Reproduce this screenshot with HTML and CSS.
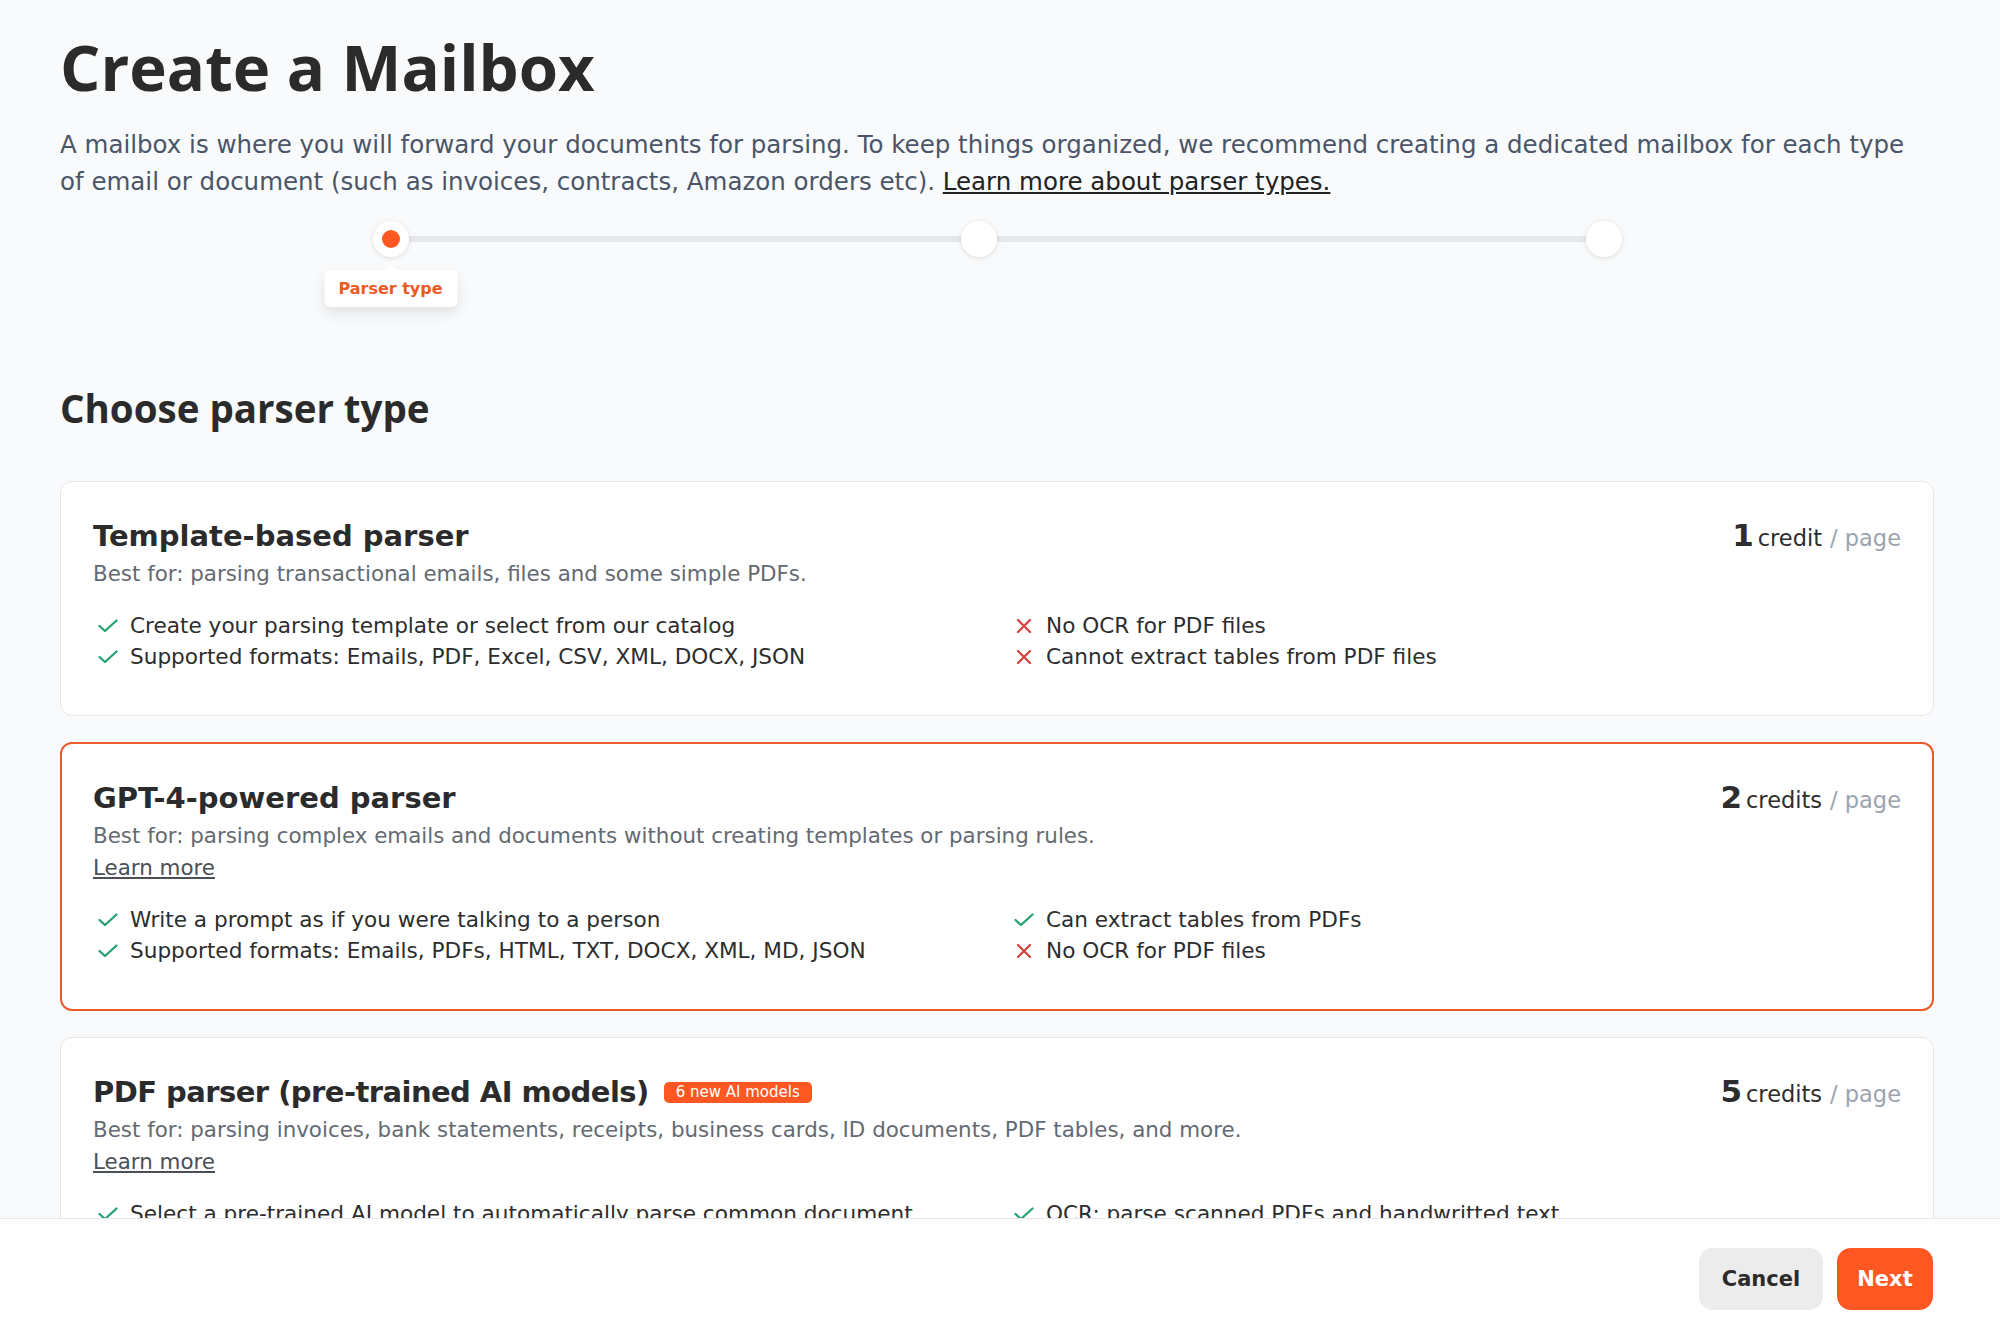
FILE: index.html
```html
<!DOCTYPE html>
<html lang="en">
<head>
<meta charset="utf-8">
<title>Create a Mailbox</title>
<link rel="stylesheet" href="styles.css">
</head>
<body>
<main class="page">
  <h1 class="title">Create a Mailbox</h1>
  <p class="intro">A mailbox is where you will forward your documents for parsing. To keep things organized, we recommend creating a dedicated mailbox for each type of email or document (such as invoices, contracts, Amazon orders etc). <a class="intro-link" href="#">Learn more about parser types.</a></p>

  <div class="stepper">
    <div class="step">
      <span class="dot"></span>
      <div class="tip">Parser type</div>
    </div>
    <div class="line line-a"></div>
    <div class="step"></div>
    <div class="line line-b"></div>
    <div class="step"></div>
  </div>

  <h2 class="section-title">Choose parser type</h2>

  <div class="cards">
    <section class="card">
      <div class="card-head">
        <div class="card-info">
          <h3 class="card-title">Template-based parser</h3>
          <p class="best">Best for: parsing transactional emails, files and some simple PDFs.</p>
        </div>
        <div class="price"><b>1</b><span>credit</span><span class="per">/ page</span></div>
      </div>
      <div class="features">
        <ul>
          <li><svg class="ic" viewBox="0 0 20 14"><polyline points="1.5,7 7,12 18.5,1.5" fill="none" stroke="#23a26f" stroke-width="2.3" stroke-linecap="round" stroke-linejoin="round"/></svg><span>Create your parsing template or select from our catalog</span></li>
          <li><svg class="ic" viewBox="0 0 20 14"><polyline points="1.5,7 7,12 18.5,1.5" fill="none" stroke="#23a26f" stroke-width="2.3" stroke-linecap="round" stroke-linejoin="round"/></svg><span>Supported formats: Emails, PDF, Excel, CSV, XML, DOCX, JSON</span></li>
        </ul>
        <ul>
          <li><svg class="ic" viewBox="0 0 20 14"><path d="M4 1 L16 13 M16 1 L4 13" fill="none" stroke="#d6453d" stroke-width="2.3" stroke-linecap="round"/></svg><span>No OCR for PDF files</span></li>
          <li><svg class="ic" viewBox="0 0 20 14"><path d="M4 1 L16 13 M16 1 L4 13" fill="none" stroke="#d6453d" stroke-width="2.3" stroke-linecap="round"/></svg><span>Cannot extract tables from PDF files</span></li>
        </ul>
      </div>
    </section>

    <section class="card card-selected">
      <div class="card-head">
        <div class="card-info">
          <h3 class="card-title">GPT-4-powered parser</h3>
          <p class="best">Best for: parsing complex emails and documents without creating templates or parsing rules.</p>
          <a class="learn" href="#">Learn more</a>
        </div>
        <div class="price"><b>2</b><span>credits</span><span class="per">/ page</span></div>
      </div>
      <div class="features">
        <ul>
          <li><svg class="ic" viewBox="0 0 20 14"><polyline points="1.5,7 7,12 18.5,1.5" fill="none" stroke="#23a26f" stroke-width="2.3" stroke-linecap="round" stroke-linejoin="round"/></svg><span>Write a prompt as if you were talking to a person</span></li>
          <li><svg class="ic" viewBox="0 0 20 14"><polyline points="1.5,7 7,12 18.5,1.5" fill="none" stroke="#23a26f" stroke-width="2.3" stroke-linecap="round" stroke-linejoin="round"/></svg><span>Supported formats: Emails, PDFs, HTML, TXT, DOCX, XML, MD, JSON</span></li>
        </ul>
        <ul>
          <li><svg class="ic" viewBox="0 0 20 14"><polyline points="1.5,7 7,12 18.5,1.5" fill="none" stroke="#23a26f" stroke-width="2.3" stroke-linecap="round" stroke-linejoin="round"/></svg><span>Can extract tables from PDFs</span></li>
          <li><svg class="ic" viewBox="0 0 20 14"><path d="M4 1 L16 13 M16 1 L4 13" fill="none" stroke="#d6453d" stroke-width="2.3" stroke-linecap="round"/></svg><span>No OCR for PDF files</span></li>
        </ul>
      </div>
    </section>

    <section class="card">
      <div class="card-head">
        <div class="card-info">
          <h3 class="card-title"><span class="title-tight">PDF parser (pre-trained AI models)</span> <span class="badge">6 new AI models</span></h3>
          <p class="best">Best for: parsing invoices, bank statements, receipts, business cards, ID documents, PDF tables, and more.</p>
          <a class="learn" href="#">Learn more</a>
        </div>
        <div class="price"><b>5</b><span>credits</span><span class="per">/ page</span></div>
      </div>
      <div class="features">
        <ul>
          <li><svg class="ic" viewBox="0 0 20 14"><polyline points="1.5,7 7,12 18.5,1.5" fill="none" stroke="#23a26f" stroke-width="2.3" stroke-linecap="round" stroke-linejoin="round"/></svg><span>Select a pre-trained AI model to automatically parse common document types</span></li>
        </ul>
        <ul>
          <li><svg class="ic" viewBox="0 0 20 14"><polyline points="1.5,7 7,12 18.5,1.5" fill="none" stroke="#23a26f" stroke-width="2.3" stroke-linecap="round" stroke-linejoin="round"/></svg><span>OCR: parse scanned PDFs and handwritted text</span></li>
        </ul>
      </div>
    </section>
  </div>
</main>

<footer class="footer">
  <button class="btn btn-cancel" type="button">Cancel</button>
  <button class="btn btn-next" type="button">Next</button>
</footer>
</body>
</html>
```

FILE: styles.css
```css
* { box-sizing: border-box; }
body {
  margin: 0;
  background: #f9fafb;
  font-family: "DejaVu Sans", "Open Sans", sans-serif;
  color: #2d2d2d;
}
.page { padding: 31px 66px 140px 60px; }
.title {
  margin: 0;
  font-family: "Open Sans", "DejaVu Sans", sans-serif;
  font-size: 63.5px;
  line-height: 72px;
  font-weight: 700;
  color: #2b2b2b;
}
.intro {
  margin: 23px 0 0;
  font-size: 24.5px;
  line-height: 37px;
  color: #4a5568;
}
.intro-link {
  color: #222;
  text-decoration: underline;
}
.stepper {
  display: flex;
  align-items: center;
  width: 1249px;
  margin: 21px auto 0;
}
.step {
  flex: none;
  width: 36px;
  height: 36px;
  border-radius: 50%;
  background: #fff;
  box-shadow: 0 1px 5px rgba(0, 0, 0, 0.12);
  display: flex;
  align-items: center;
  justify-content: center;
  position: relative;
}
.dot { width: 18px; height: 18px; border-radius: 50%; background: #ff5722; }
.line { height: 6px; background: #e5e7eb; }
.line-a { flex: 552 1 0; }
.line-b { flex: 589 1 0; }
.tip {
  position: absolute;
  top: 49px;
  left: 50%;
  transform: translateX(-50%);
  width: 133px;
  height: 37px;
  background: #fff;
  border-radius: 6px;
  box-shadow: 0 6px 14px rgba(0, 0, 0, 0.1);
  color: #ec5a24;
  font-size: 16px;
  font-weight: 700;
  display: flex;
  align-items: center;
  justify-content: center;
  white-space: nowrap;
}
.tip::before {
  content: "";
  position: absolute;
  top: -6px;
  left: 50%;
  margin-left: -6px;
  border-left: 6px solid transparent;
  border-right: 6px solid transparent;
  border-bottom: 6px solid #fff;
}
.section-title {
  margin: 129px 0 0;
  font-family: "Open Sans", "DejaVu Sans", sans-serif;
  font-size: 38.5px;
  line-height: 44px;
  font-weight: 700;
  color: #2b2b2b;
}
.cards { margin-top: 51px; display: flex; flex-direction: column; gap: 26px; }
.card {
  background: #fff;
  border: 1px solid #e5e7eb;
  border-radius: 12px;
  padding: 34px 32px 43px;
}
.card-selected { border: 2px solid #ea5a2a; padding: 34px 31px 43px; }
.card-head { display: flex; justify-content: space-between; align-items: baseline; }
.card-info { display: flex; flex-direction: column; align-items: flex-start; }
.card-title {
  margin: 0;
  font-size: 29px;
  line-height: 40px;
  font-weight: 700;
  color: #2b2b2b;
  display: flex;
  align-items: center;
  gap: 15px;
}
.title-tight { letter-spacing: -0.55px; }
.badge {
  background: #ff5722;
  color: #fff;
  font-size: 15px;
  line-height: 21px;
  font-weight: 400;
  padding: 0 12px;
  border-radius: 5px;
}
.best { margin: 0; padding-top: 2px; font-size: 21.4px; line-height: 32px; color: #646a72; }
.learn { font-size: 21.4px; line-height: 32px; color: #4b4f56; text-decoration: underline; }
.price {
  display: flex;
  align-items: baseline;
  gap: 8px;
  font-size: 22.5px;
  color: #2d2d2d;
  white-space: nowrap;
}
.price b { font-size: 31px; font-weight: 700; margin-right: -4px; }
.price .per { color: #9ca3af; }
.features {
  display: grid;
  grid-template-columns: 1fr 1fr;
  column-gap: 24px;
  margin-top: 20px;
}
.features ul { list-style: none; margin: 0; padding: 0; }
.features li {
  display: flex;
  align-items: flex-start;
  gap: 12px;
  padding: 0 20px 0 5px;
  font-size: 21.6px;
  line-height: 31px;
  color: #2d2d2d;
}
.ic { width: 20px; height: 14px; flex: none; margin-top: 9px; }
.footer {
  position: fixed;
  left: 0;
  right: 0;
  bottom: 0;
  height: 113px;
  background: #fff;
  border-top: 1px solid #e5e7eb;
  display: flex;
  justify-content: flex-end;
  align-items: flex-start;
  gap: 14px;
  padding: 29px 67px 0 0;
}
.btn {
  height: 62px;
  border: none;
  border-radius: 14px;
  font-family: inherit;
  font-size: 21px;
  font-weight: 700;
}
.btn-cancel { width: 124px; background: #ececec; color: #2b2b2b; }
.btn-next { width: 96px; background: #ff5722; color: #fff; }
```
